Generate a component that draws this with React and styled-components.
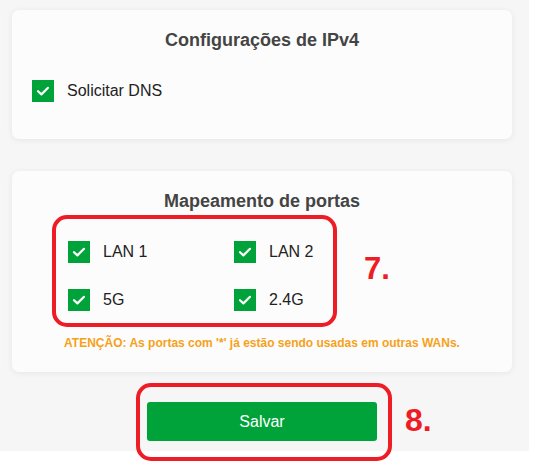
import React from "react";
import styled, { createGlobalStyle } from "styled-components";

const GlobalStyle = createGlobalStyle`
  html, body {
    margin: 0;
    padding: 0;
    min-height: 100%;
    background: #ffffff;
    font-family: "Liberation Sans", Arial, sans-serif;
  }
  #root {
    min-height: 471px;
  }
`;

const Page = styled.main`
  width: 529px;
  box-sizing: border-box;
  padding: 10px 17px 10px 12px;
  background: #f6f6f6;
  display: flex;
  flex-direction: column;
  align-items: center;
`;

const Card = styled.section`
  width: 100%;
  box-sizing: border-box;
  background: #fcfcfc;
  border-radius: 7px;
  box-shadow: 0 1px 6px rgba(0, 0, 0, 0.07);
  padding: 20px 20px ${(p) => p.$bottom}px;
  margin-bottom: ${(p) => p.$gap}px;
  display: flex;
  flex-direction: column;
`;

const Title = styled.h2`
  margin: 0 0 29px;
  text-align: center;
  font-size: 18px;
  line-height: 21px;
  font-weight: bold;
  color: #444444;
`;

const CheckRow = styled.label`
  display: flex;
  align-items: center;
  gap: 13px;
  height: 22px;
  font-size: 16px;
  color: #222222;
`;

const Box = styled.span`
  width: 22px;
  height: 22px;
  flex: none;
  background: #00a33a;
  display: flex;
  align-items: center;
  justify-content: center;
`;

const PortGrid = styled.div`
  position: relative;
  align-self: flex-start;
  margin-left: 36px;
  display: grid;
  grid-template-columns: 166px 166px;
  row-gap: 26px;
`;

const Warning = styled.p`
  margin: 25px 0 0;
  text-align: center;
  font-size: 12px;
  line-height: 14px;
  font-weight: bold;
  color: #f7a11a;
`;

const ButtonSlot = styled.div`
  position: relative;
  width: 230px;
`;

const SaveButton = styled.button`
  width: 100%;
  height: 39px;
  border: none;
  border-radius: 3px;
  background: #00a33a;
  color: #ffffff;
  font-family: "Liberation Sans", Arial, sans-serif;
  font-size: 16px;
  cursor: pointer;
`;

const Highlight = styled.div`
  position: absolute;
  left: ${(p) => p.$left}px;
  top: ${(p) => p.$top}px;
  width: ${(p) => p.$width}px;
  height: ${(p) => p.$height}px;
  box-sizing: border-box;
  border: 4px solid #ee1c25;
  border-radius: 15px;
  pointer-events: none;
`;

const Marker = styled.span`
  position: absolute;
  left: ${(p) => p.$left}px;
  top: ${(p) => p.$top}px;
  font-size: ${(p) => p.$size}px;
  line-height: ${(p) => p.$size}px;
  font-weight: bold;
  color: #ee1c25;
  white-space: nowrap;
`;

const Check = () => (
  <svg width="22" height="22" viewBox="0 0 22 22" fill="none">
    <path
      d="M6 11.2 L9.4 14.4 L16 7.8"
      stroke="#ffffff"
      strokeWidth="2.2"
      strokeLinecap="round"
      strokeLinejoin="round"
    />
  </svg>
);

const Checkbox = ({ label }) => (
  <CheckRow>
    <Box>
      <Check />
    </Box>
    {label}
  </CheckRow>
);

const ports = ["LAN 1", "LAN 2", "5G", "2.4G"];

export default function App() {
  return (
    <>
      <GlobalStyle />
      <Page>
        <Card $bottom={37} $gap={32}>
          <Title>Configurações de IPv4</Title>
          <Checkbox label="Solicitar DNS" />
        </Card>

        <Card $bottom={22} $gap={30}>
          <Title>Mapeamento de portas</Title>
          <PortGrid>
            {ports.map((p) => (
              <Checkbox key={p} label={p} />
            ))}
            <Highlight $left={-16} $top={-26} $width={285} $height={112} />
            <Marker $left={296} $top={12} $size={31}>
              7.
            </Marker>
          </PortGrid>
          <Warning>
            ATENÇÃO: As portas com '*' já estão sendo usadas em outras WANs.
          </Warning>
        </Card>

        <ButtonSlot>
          <SaveButton>Salvar</SaveButton>
          <Highlight $left={-11} $top={-19} $width={256} $height={78} />
          <Marker $left={258} $top={2} $size={32}>
            8.
          </Marker>
        </ButtonSlot>
      </Page>
    </>
  );
}
